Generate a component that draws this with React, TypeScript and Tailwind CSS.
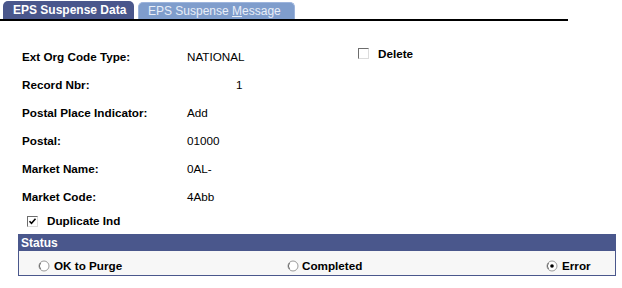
import React from "react";

const font = { fontFamily: '"Liberation Sans", Arial, sans-serif' };

function Checkbox({ checked }: { checked?: boolean }) {
  return (
    <span className="relative inline-block h-[11px] w-[11px] border border-t-[#6d6d6d] border-l-[#6d6d6d] border-r-[#dcdcdc] border-b-[#dcdcdc] bg-white">
      {checked && (
        <svg viewBox="0 0 9 9" className="absolute left-0 top-0 h-[9px] w-[9px]">
          <path d="M1.5 4.2 L3.5 6.3 L7.5 1.8" stroke="#000" strokeWidth="1.5" fill="none" />
        </svg>
      )}
    </span>
  );
}

function Radio({ checked }: { checked?: boolean }) {
  return (
    <svg viewBox="0 0 12 12" className="h-[12px] w-[12px]">
      <circle cx="6" cy="6" r="5" fill="#fff" stroke="#9a9a9a" strokeWidth="1" />
      <path d="M2.5 9 A5 5 0 0 1 2.5 3" stroke="#6d6d6d" strokeWidth="1" fill="none" />
      {checked && <circle cx="6" cy="6" r="1.8" fill="#000" />}
    </svg>
  );
}

function Row({ label, value, valueClass = "pl-[187px]" }: { label: string; value: string; valueClass?: string }) {
  return (
    <div className="relative flex h-[28px] items-center">
      <span className="absolute left-[22px] text-[11.7px] font-bold text-black">{label}</span>
      <span className={`${valueClass} text-[11.7px] text-black`}>{value}</span>
    </div>
  );
}

export default function App() {
  return (
    <div className="h-[288px] w-[622px] bg-white" style={font}>
      {/* tabs */}
      <div className="flex h-[21px] w-[568px] items-end gap-[4px] border-b-[2px] border-black pl-[3px]">
        <div className="flex h-[18px] w-[131px] items-center rounded-t-[5px] bg-[#4a578c] pl-[10px] text-[12px] font-bold text-white">
          EPS Suspense Data
        </div>
        <div className="flex h-[17px] w-[157px] items-center rounded-t-[5px] border border-b-0 border-[#9db4dc] bg-[#7f9dcc] pl-[9px] text-[12px] text-[#e8eef8]">
          <span className="whitespace-pre">
            EPS Suspense{" "}<span className="underline">M</span>essage
          </span>
        </div>
      </div>

      {/* fields */}
      <div className="relative pt-[22px]">
        <div className="absolute left-[358px] top-[24px] flex items-center gap-[9px]">
          <Checkbox />
          <span className="text-[11.7px] font-bold">Delete</span>
        </div>
        <Row label="Ext Org Code Type:" value="NATIONAL" />
        <Row label="Record Nbr:" value="1" valueClass="pl-[236px]" />
        <Row label="Postal Place Indicator:" value="Add" />
        <Row label="Postal:" value="01000" />
        <Row label="Market Name:" value="0AL-" />
        <Row label="Market Code:" value="4Abb" />
        <div className="flex h-[20px] items-center gap-[9px] pl-[27px]">
          <Checkbox checked />
          <span className="text-[11.7px] font-bold">Duplicate Ind</span>
        </div>
      </div>

      {/* status */}
      <div className="ml-[18px] mt-[3px] w-[598px] border border-[#4a578c] bg-[#f7f7f7]">
        <div className="flex h-[16px] items-center bg-[#4a578c] pl-[2px] text-[12px] font-bold text-white">
          Status
        </div>
        <div className="relative h-[24px] text-[11.7px] font-bold">
          <div className="absolute left-[19px] top-[6px] flex items-center gap-[4px]">
            <Radio />
            <span>OK to Purge</span>
          </div>
          <div className="absolute left-[268px] top-[6px] flex items-center gap-[3px]">
            <Radio />
            <span>Completed</span>
          </div>
          <div className="absolute left-[527px] top-[6px] flex items-center gap-[4px]">
            <Radio checked />
            <span>Error</span>
          </div>
        </div>
      </div>
    </div>
  );
}
